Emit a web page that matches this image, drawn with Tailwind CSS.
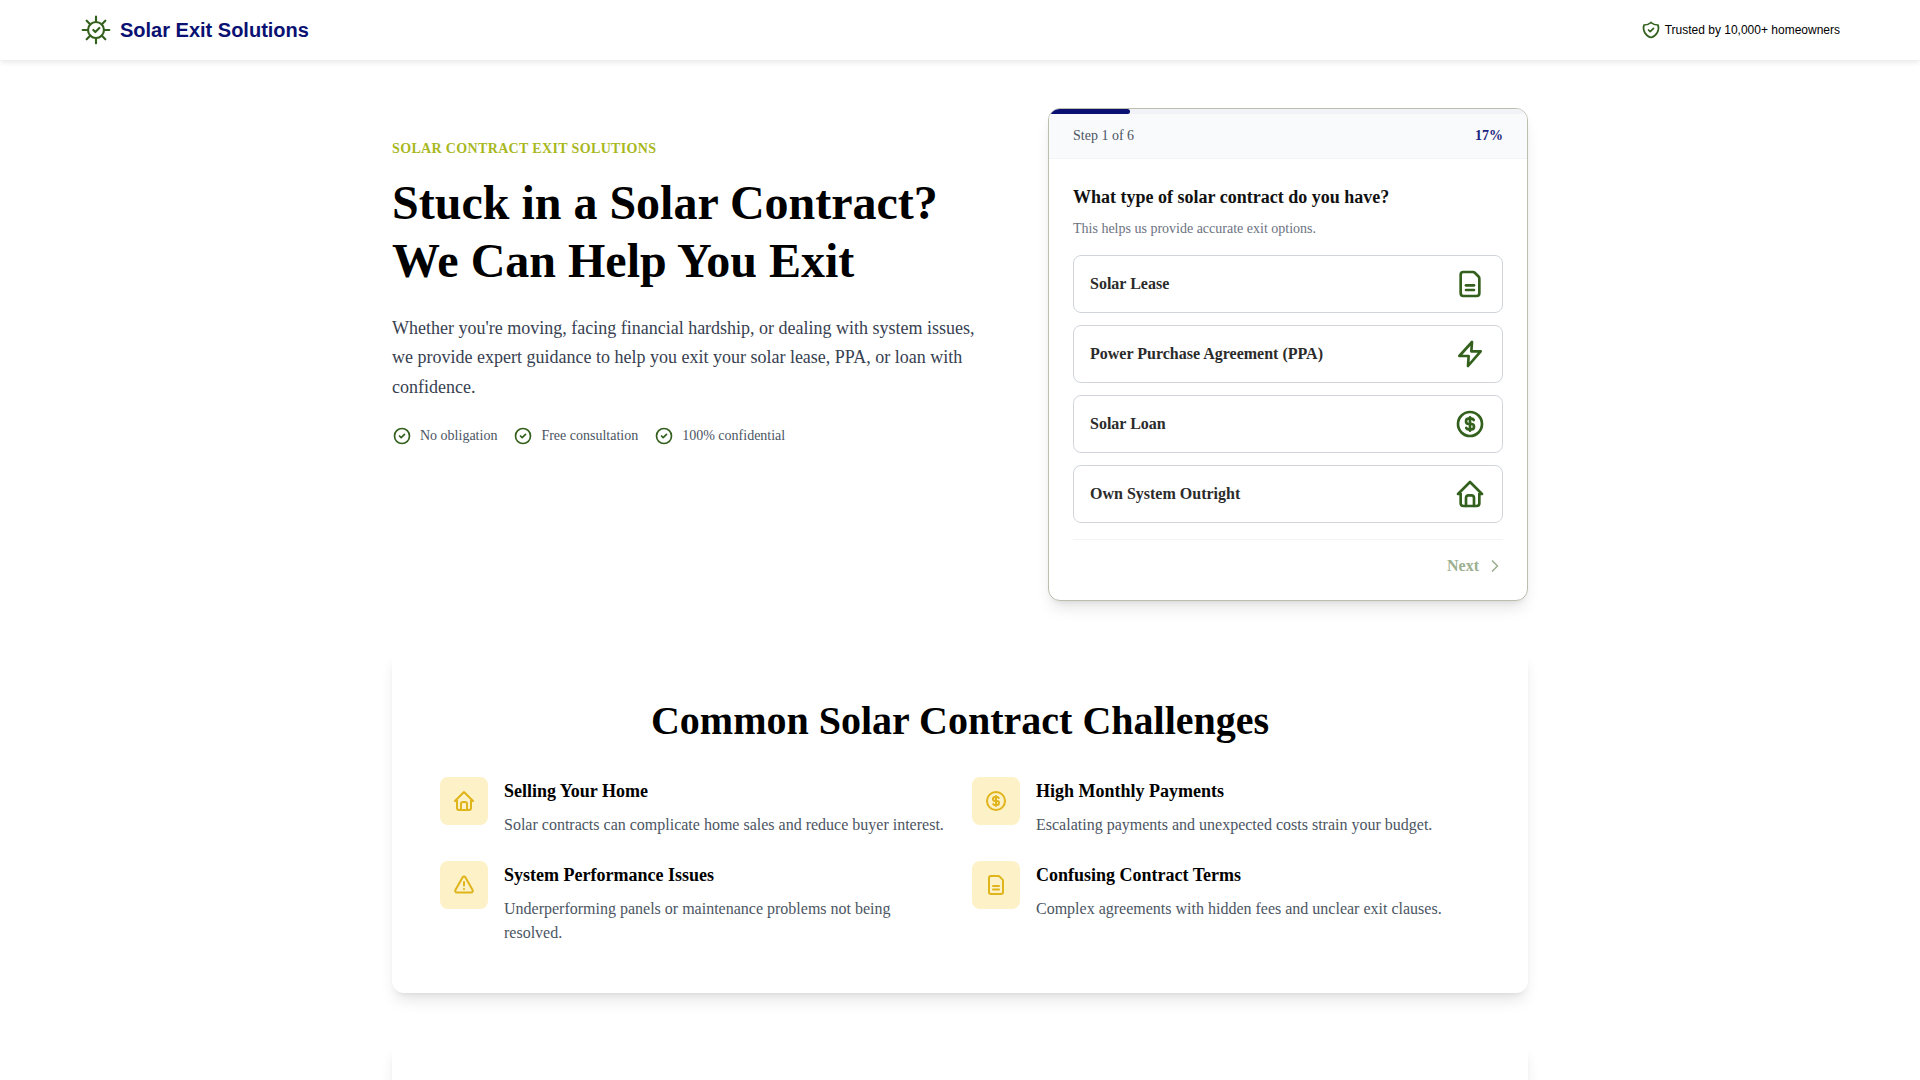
<!DOCTYPE html>
<html lang="en">
  <head>
    <meta charset="UTF-8" />
    <title>Solar Exit Solutions</title>
    <script src="https://cdn.jsdelivr.net/npm/@tailwindcss/browser@4"></script>
  </head>
  <body class="bg-white font-['Liberation_Serif',serif] h-[1080px] overflow-hidden">
    <header class="h-[60px] bg-white shadow-[0_2px_6px_rgba(0,0,0,0.1)] px-20 flex items-center justify-between relative">
      <div class="flex items-center gap-2">
        <svg class="w-8 h-8 text-[#33601c]" viewBox="0 0 24 24" fill="none" stroke="currentColor" stroke-width="1.6" stroke-linecap="round" stroke-linejoin="round">
          <circle cx="12" cy="12" r="6" />
          <path d="m10 12 1.5 1.5 3-3" />
          <path d="M12 2v4M12 18v4M2 12h4M18 12h4M5 5l2.8 2.8M16.2 16.2 19 19M5 19l2.8-2.8M16.2 7.8 19 5" />
        </svg>
        <span class="font-['Liberation_Sans',sans-serif] font-bold text-xl text-[#0a1172]">Solar Exit Solutions</span>
      </div>
      <div class="flex items-center gap-1 font-['Liberation_Sans',sans-serif] text-xs text-black">
        <svg class="w-5 h-5 text-[#33601c]" viewBox="0 0 24 24" fill="none" stroke="currentColor" stroke-width="2" stroke-linecap="round" stroke-linejoin="round">
          <path d="M12 3a12 12 0 0 0 8.5 3a12 12 0 0 1-8.5 15a12 12 0 0 1-8.5-15a12 12 0 0 0 8.5-3" />
          <path d="m9 12 2 2 4-4" />
        </svg>
        <span>Trusted by 10,000+ homeowners</span>
      </div>
    </header>

    <main class="w-[1136px] mx-auto pt-12">
      <section class="flex justify-between items-start">
        <div class="w-[600px] pt-[31px]">
          <p class="text-sm font-bold uppercase tracking-wide text-[#a8b81e]">Solar Contract Exit Solutions</p>
          <h1 class="mt-[15px] text-5xl leading-[58px] font-bold text-black">Stuck in a Solar Contract?<br />We Can Help You Exit</h1>
          <p class="mt-6 text-lg leading-[29.25px] text-[#374151]">Whether you're moving, facing financial hardship, or dealing with system issues, we provide expert guidance to help you exit your solar lease, PPA, or loan with confidence.</p>
          <div class="mt-6 flex items-center gap-4 text-sm text-[#4b5563]">
            <div class="flex items-center gap-2">
              <svg class="w-5 h-5 text-[#33601c]" viewBox="0 0 24 24" fill="none" stroke="currentColor" stroke-width="2" stroke-linecap="round" stroke-linejoin="round"><circle cx="12" cy="12" r="9" /><path d="m9 12 2 2 4-4" /></svg>
              <span>No obligation</span>
            </div>
            <div class="flex items-center gap-2">
              <svg class="w-5 h-5 text-[#33601c]" viewBox="0 0 24 24" fill="none" stroke="currentColor" stroke-width="2" stroke-linecap="round" stroke-linejoin="round"><circle cx="12" cy="12" r="9" /><path d="m9 12 2 2 4-4" /></svg>
              <span>Free consultation</span>
            </div>
            <div class="flex items-center gap-2">
              <svg class="w-5 h-5 text-[#33601c]" viewBox="0 0 24 24" fill="none" stroke="currentColor" stroke-width="2" stroke-linecap="round" stroke-linejoin="round"><circle cx="12" cy="12" r="9" /><path d="m9 12 2 2 4-4" /></svg>
              <span>100% confidential</span>
            </div>
          </div>
        </div>

        <div class="w-[480px] h-[493px] rounded-xl border border-[#bcbfae] bg-white shadow-lg overflow-hidden">
          <div class="h-[5px] bg-[#f1f3f9]">
            <div class="h-full w-[17%] bg-[#0a1172] rounded-r-sm"></div>
          </div>
          <div class="h-[45px] px-6 bg-[#f9fafb] border-b border-[#f3f4f6] flex items-center justify-between text-sm">
            <span class="text-[#4b5563]">Step 1 of 6</span>
            <span class="font-bold text-[#1a237e]">17%</span>
          </div>
          <div class="px-6 pt-6">
            <h2 class="text-lg font-bold leading-7 text-[#111]">What type of solar contract do you have?</h2>
            <p class="mt-2 text-sm text-[#6b7280]">This helps us provide accurate exit options.</p>
            <div class="mt-4 flex flex-col gap-3">
              <button class="h-[58px] px-4 rounded-lg border border-[#d1d5db] flex items-center justify-between font-bold text-base text-[#2b2b2b]">
                <span>Solar Lease</span>
                <svg class="w-8 h-8 text-[#33601c]" viewBox="0 0 24 24" fill="none" stroke="currentColor" stroke-width="2" stroke-linecap="round" stroke-linejoin="round"><path d="M7 3h7.2a2 2 0 0 1 1.4.6l2.8 2.8a2 2 0 0 1 .6 1.4V19a2 2 0 0 1-2 2H7a2 2 0 0 1-2-2V5a2 2 0 0 1 2-2z" /><path d="M9 13h6" /><path d="M9 16.5h6" /></svg>
              </button>
              <button class="h-[58px] px-4 rounded-lg border border-[#d1d5db] flex items-center justify-between font-bold text-base text-[#2b2b2b]">
                <span>Power Purchase Agreement (PPA)</span>
                <svg class="w-8 h-8 text-[#33601c]" viewBox="0 0 24 24" fill="none" stroke="currentColor" stroke-width="2" stroke-linecap="round" stroke-linejoin="round"><path d="M13.5 3 13 10h7L10.5 21l.5-7.5H4z" /></svg>
              </button>
              <button class="h-[58px] px-4 rounded-lg border border-[#d1d5db] flex items-center justify-between font-bold text-base text-[#2b2b2b]">
                <span>Solar Loan</span>
                <svg class="w-8 h-8 text-[#33601c]" viewBox="0 0 24 24" fill="none" stroke="currentColor" stroke-width="2" stroke-linecap="round" stroke-linejoin="round"><circle cx="12" cy="12" r="9" /><path d="M14.8 9a2 2 0 0 0-1.8-1h-2a2 2 0 1 0 0 4h2a2 2 0 1 1 0 4h-2a2 2 0 0 1-1.8-1" /><path d="M12 7v10" /></svg>
              </button>
              <button class="h-[58px] px-4 rounded-lg border border-[#d1d5db] flex items-center justify-between font-bold text-base text-[#2b2b2b]">
                <span>Own System Outright</span>
                <svg class="w-8 h-8 text-[#33601c]" viewBox="0 0 24 24" fill="none" stroke="currentColor" stroke-width="2" stroke-linecap="round" stroke-linejoin="round"><path d="M5 12H3l9-9 9 9h-2" /><path d="M5 12v7a2 2 0 0 0 2 2h10a2 2 0 0 0 2-2v-7" /><path d="M9 21v-6a2 2 0 0 1 2-2h2a2 2 0 0 1 2 2v6" /></svg>
              </button>
            </div>
            <div class="mt-4 border-t border-[#f3f4f6] pt-[14px] flex justify-end items-center gap-1.5 font-bold text-base text-[#9db08f]">
              <span>Next</span>
              <svg class="w-5 h-5 -mr-[2px]" viewBox="0 0 24 24" fill="none" stroke="currentColor" stroke-width="2" stroke-linecap="round" stroke-linejoin="round"><path d="m9 6 6 6-6 6" /></svg>
            </div>
          </div>
        </div>
      </section>

      <section class="mt-12 h-[344px] rounded-xl bg-white shadow-lg px-12 pt-12">
        <h2 class="text-center text-[40px] leading-[48px] font-bold text-black">Common Solar Contract Challenges</h2>
        <div class="mt-8 grid grid-cols-2 gap-x-6 gap-y-6">
          <div class="flex gap-4">
            <div class="w-12 h-12 shrink-0 rounded-lg bg-[#fdf1c7] flex items-center justify-center">
              <svg class="w-6 h-6 text-[#e0b41b]" viewBox="0 0 24 24" fill="none" stroke="currentColor" stroke-width="2" stroke-linecap="round" stroke-linejoin="round"><path d="M5 12H3l9-9 9 9h-2" /><path d="M5 12v7a2 2 0 0 0 2 2h10a2 2 0 0 0 2-2v-7" /><path d="M9 21v-6a2 2 0 0 1 2-2h2a2 2 0 0 1 2 2v6" /></svg>
            </div>
            <div>
              <h3 class="text-lg leading-7 font-bold text-black">Selling Your Home</h3>
              <p class="mt-2 text-base text-[#4b5563]">Solar contracts can complicate home sales and reduce buyer interest.</p>
            </div>
          </div>
          <div class="flex gap-4">
            <div class="w-12 h-12 shrink-0 rounded-lg bg-[#fdf1c7] flex items-center justify-center">
              <svg class="w-6 h-6 text-[#e0b41b]" viewBox="0 0 24 24" fill="none" stroke="currentColor" stroke-width="2" stroke-linecap="round" stroke-linejoin="round"><circle cx="12" cy="12" r="9" /><path d="M14.8 9a2 2 0 0 0-1.8-1h-2a2 2 0 1 0 0 4h2a2 2 0 1 1 0 4h-2a2 2 0 0 1-1.8-1" /><path d="M12 7v10" /></svg>
            </div>
            <div>
              <h3 class="text-lg leading-7 font-bold text-black">High Monthly Payments</h3>
              <p class="mt-2 text-base text-[#4b5563]">Escalating payments and unexpected costs strain your budget.</p>
            </div>
          </div>
          <div class="flex gap-4">
            <div class="w-12 h-12 shrink-0 rounded-lg bg-[#fdf1c7] flex items-center justify-center">
              <svg class="w-6 h-6 text-[#e0b41b]" viewBox="0 0 24 24" fill="none" stroke="currentColor" stroke-width="2" stroke-linecap="round" stroke-linejoin="round"><path d="M12 9v3.5" /><path d="M10.5 4.5 3.4 17a1.7 1.7 0 0 0 1.5 2.5h14.2a1.7 1.7 0 0 0 1.5-2.5L13.5 4.5a1.7 1.7 0 0 0-3 0z" /><path d="M12 16h.01" /></svg>
            </div>
            <div>
              <h3 class="text-lg leading-7 font-bold text-black">System Performance Issues</h3>
              <p class="mt-2 text-base text-[#4b5563]">Underperforming panels or maintenance problems not being resolved.</p>
            </div>
          </div>
          <div class="flex gap-4">
            <div class="w-12 h-12 shrink-0 rounded-lg bg-[#fdf1c7] flex items-center justify-center">
              <svg class="w-6 h-6 text-[#e0b41b]" viewBox="0 0 24 24" fill="none" stroke="currentColor" stroke-width="2" stroke-linecap="round" stroke-linejoin="round"><path d="M7 3h7.2a2 2 0 0 1 1.4.6l2.8 2.8a2 2 0 0 1 .6 1.4V19a2 2 0 0 1-2 2H7a2 2 0 0 1-2-2V5a2 2 0 0 1 2-2z" /><path d="M9 13h6" /><path d="M9 16.5h6" /></svg>
            </div>
            <div>
              <h3 class="text-lg leading-7 font-bold text-black">Confusing Contract Terms</h3>
              <p class="mt-2 text-base text-[#4b5563]">Complex agreements with hidden fees and unclear exit clauses.</p>
            </div>
          </div>
        </div>
      </section>

      <section class="mt-12 h-[200px] rounded-xl bg-white shadow-lg"></section>
    </main>
  </body>
</html>
